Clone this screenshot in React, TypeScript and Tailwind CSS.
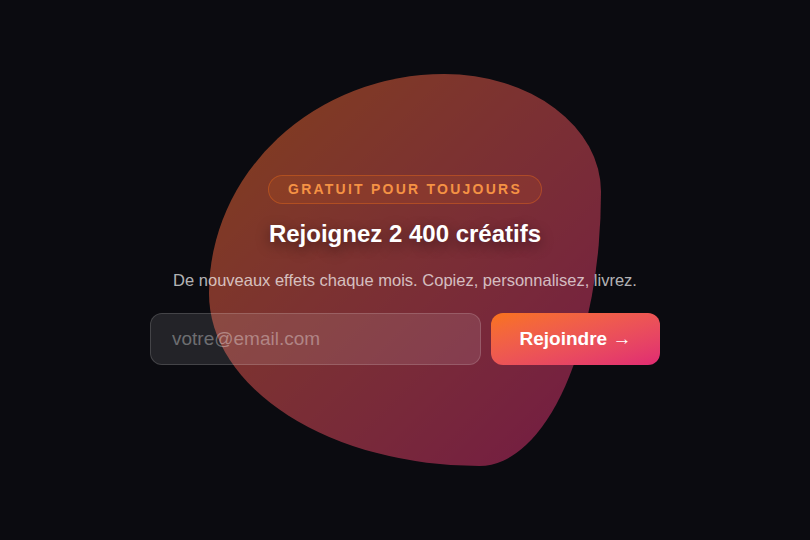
import React, { useState } from 'react';

export default function App() {
  const [email, setEmail] = useState('');

  return (
    <div
      className="relative flex h-[540px] w-full items-center justify-center overflow-hidden bg-[#0b0b10]"
      style={{ fontFamily: '"Liberation Sans", Arial, sans-serif' }}
    >
      {/* Blob */}
      <div className="pointer-events-none absolute left-1/2 top-1/2 h-[392px] w-[392px] -translate-x-1/2 -translate-y-1/2 rounded-[60%_40%_31%_69%/56%_30%_70%_44%] bg-gradient-to-br from-[#f97316] to-[#db2777] opacity-50 blur-[0.5px]" />

      {/* Content */}
      <div className="relative flex flex-col items-center text-center">
        <span className="rounded-full border border-[#f97316]/35 bg-[#f97316]/10 px-[19px] py-[5px] text-[14px] font-bold uppercase leading-[17px] tracking-[0.16em] text-[#f59244]">
          Gratuit pour toujours
        </span>

        <h2 className="mt-[14px] text-2xl font-bold leading-8 text-white [text-shadow:0_4px_14px_rgba(0,0,0,0.45)]">
          Rejoignez 2 400 créatifs
        </h2>

        <p className="mt-[19px] text-[16.5px] leading-[22px] text-white/70">
          De nouveaux effets chaque mois. Copiez, personnalisez, livrez.
        </p>

        <form
          onSubmit={(e) => e.preventDefault()}
          className="mt-[22px] flex w-[510px] gap-2.5"
        >
          <input
            type="email"
            value={email}
            onChange={(e) => setEmail(e.target.value)}
            placeholder="votre@email.com"
            className="h-[52px] flex-1 rounded-xl border border-white/15 bg-white/10 px-[21px] text-[19px] text-white placeholder:text-white/35 focus:outline-none"
          />
          <button
            type="submit"
            className="h-[52px] w-[169px] rounded-xl bg-gradient-to-br from-[#f97316] to-[#e02a72] text-[19px] font-bold text-white"
          >
            Rejoindre →
          </button>
        </form>
      </div>
    </div>
  );
}
